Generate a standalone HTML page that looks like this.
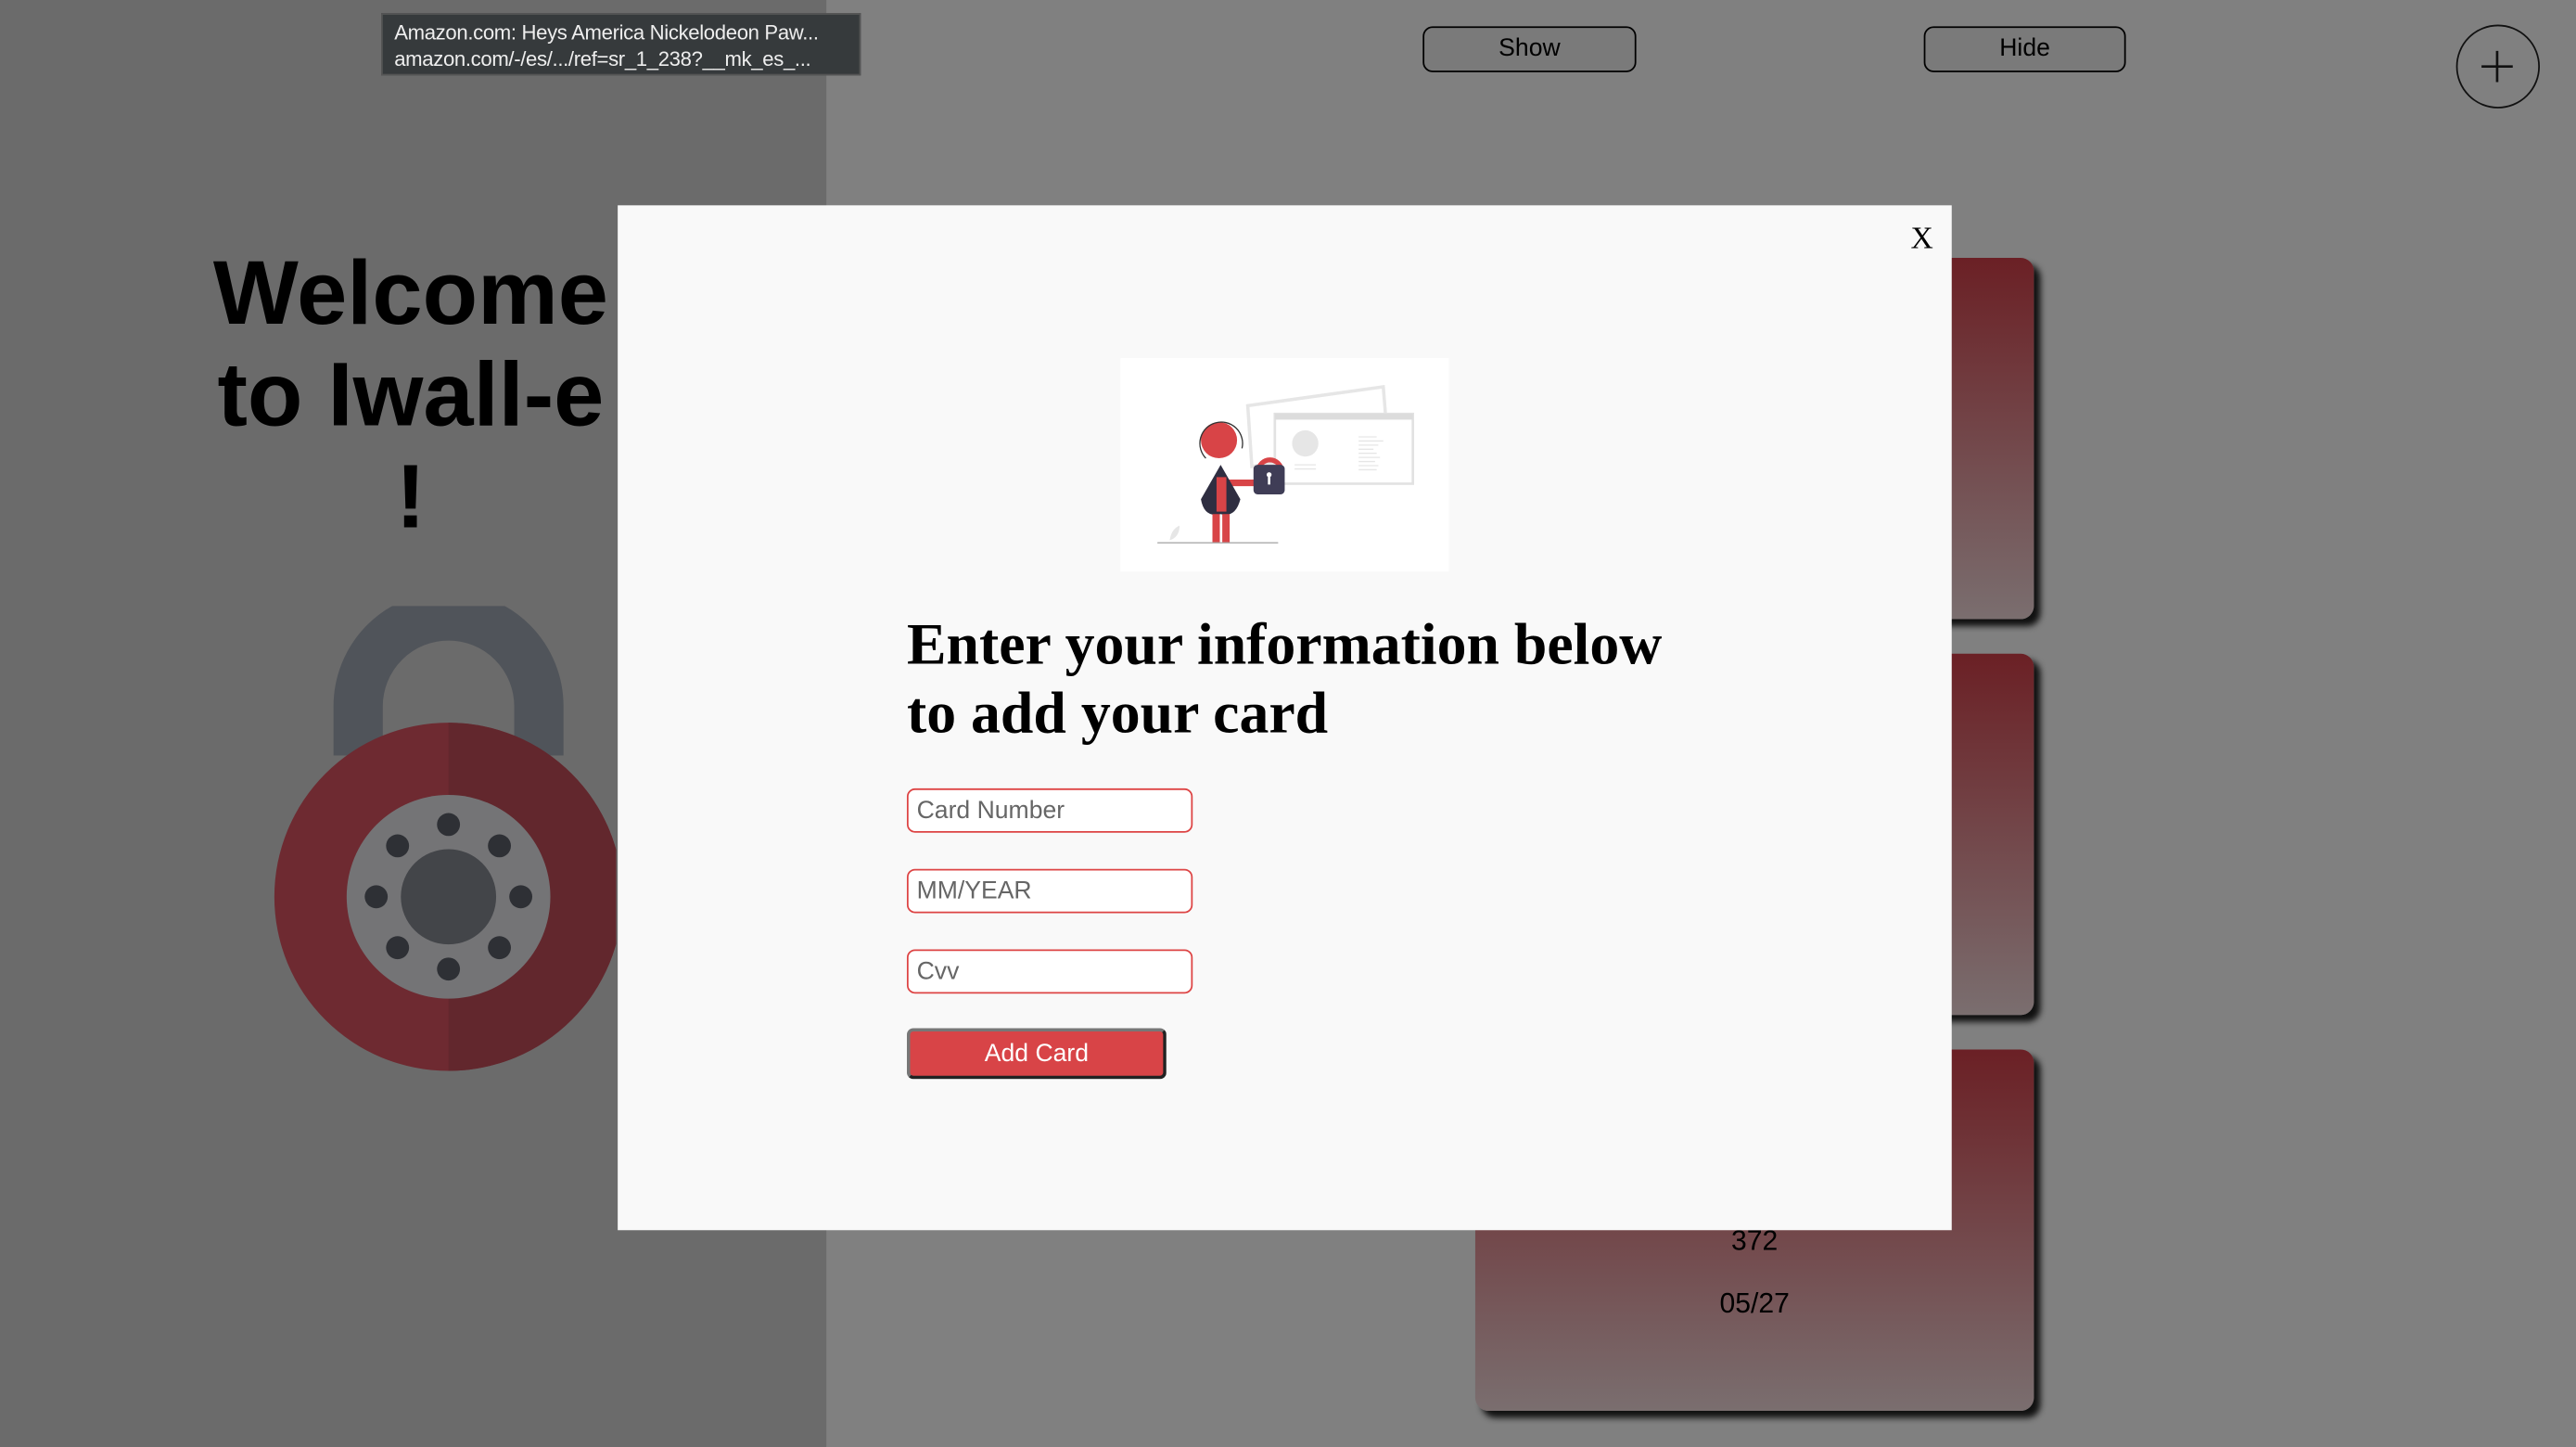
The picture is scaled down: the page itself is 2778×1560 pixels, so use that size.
<!DOCTYPE html>
<html><head><meta charset="utf-8"><style>
html,body{margin:0;padding:0;width:2778px;height:1560px;overflow:hidden;background:#808080}
#s{position:absolute;left:0;top:0;width:1568px;height:881px;transform:scale(1.77168,1.7707);transform-origin:0 0;font-family:"Liberation Sans",sans-serif}
.a{position:absolute}
.btn{position:absolute;border:1.5px solid #000;border-radius:6px;background:#7a7a7a;font-size:15px;text-align:center;box-sizing:border-box;line-height:25px}
.card{position:absolute;left:898px;width:340px;height:220px;border-radius:8px;background:linear-gradient(#6b2025,#7a6e6f);box-shadow:4px 4px 4px #111}
.inp{position:absolute;left:552px;width:174px;height:27px;border:1.5px solid #d44;border-radius:5px;background:#fff;box-sizing:border-box;font-size:15px;color:#666;padding-left:5px;line-height:25px}
</style></head><body><div id="s">
<div class="a" style="left:0;top:0;width:503px;height:881px;background:#6b6b6b"></div>
<div class="a" style="left:232px;top:8px;width:292px;height:38px;background:#363a3c;border:1px solid #555;color:#eee;font-size:12.5px;line-height:16px;padding:3px 0 0 7px;box-sizing:border-box;white-space:nowrap;letter-spacing:-0.2px">Amazon.com: Heys America Nickelodeon Paw...<br>amazon.com/-/es/.../ref=sr_1_238?__mk_es_...</div>
<div class="btn" style="left:866px;top:16px;width:130px;height:28px">Show</div>
<div class="btn" style="left:1171px;top:16px;width:123px;height:28px">Hide</div>
<div class="a" style="left:1495px;top:15px;width:51px;height:51px;border:1.5px solid #111;border-radius:50%;box-sizing:border-box"><svg width="48" height="48" viewBox="0 0 48 48" style="position:absolute;left:0;top:0"><path d="M24 15 V34 M14.5 24.5 H33.5" stroke="#111" stroke-width="1.5"/></svg></div>
<div class="a" style="left:127px;top:147px;width:246px;text-align:center;font-weight:bold;font-size:55px;line-height:62px">Welcome to Iwall-e !</div>
<svg class="a" style="left:135px;top:369px" width="240" height="284" viewBox="135 369 240 284">
<path d="M218 460 V430 a55 55 0 0 1 110 0 V460" fill="none" stroke="#50545a" stroke-width="30"/>
<circle cx="273" cy="546" r="106" fill="#6e2a31"/>
<path d="M273 440 a106 106 0 0 1 0 212z" fill="#62272d"/>
<circle cx="273" cy="546" r="62" fill="#747476"/>
<circle cx="273" cy="546" r="29" fill="#434549"/>
<g fill="#2e3035"><circle cx="273" cy="502" r="7"/><circle cx="273" cy="590" r="7"/><circle cx="229" cy="546" r="7"/><circle cx="317" cy="546" r="7"/><circle cx="242" cy="515" r="7"/><circle cx="304" cy="515" r="7"/><circle cx="242" cy="577" r="7"/><circle cx="304" cy="577" r="7"/></g>
</svg>
<div class="card" style="top:157px"></div>
<div class="card" style="top:398px"></div>
<div class="card" style="top:639px"><div class="a" style="left:0;width:340px;top:107px;text-align:center;font-size:17px">372</div><div class="a" style="left:0;width:340px;top:145px;text-align:center;font-size:17px">05/27</div></div>
<div class="a" style="left:376px;top:125px;width:812px;height:624px;background:#f9f9f9"></div>
<div class="a" style="left:1163px;top:135px;font-family:'Liberation Serif',serif;font-size:19px">X</div>
<svg class="a" style="left:681px;top:218px" width="202" height="130" viewBox="0 0 400 260">
<rect width="400" height="260" fill="#fff"/>
<path d="M155 58 L320 35 L326 110 L160 132z" fill="none" stroke="#e6e6e6" stroke-width="4"/>
<rect x="188" y="68" width="168" height="85" fill="#fff" stroke="#e2e2e2" stroke-width="3"/>
<rect x="188" y="68" width="168" height="7" fill="#dcdcdc"/>
<circle cx="225" cy="104" r="16" fill="#e6e6e6"/>
<path d="M212 130 h26 M212 135 h26" stroke="#e6e6e6" stroke-width="1.5"/>
<path d="M290 96 h22 M290 101 h30 M290 106 h24 M290 111 h18 M290 116 h22 M290 121 h26 M290 126 h20 M290 131 h24 M290 136 h22" stroke="#e6e6e6" stroke-width="1.5"/>
<circle cx="120" cy="100" r="22" fill="#d84447"/>
<path d="M104 122 a26 26 0 1 1 44 -12" fill="none" stroke="#333" stroke-width="1.5"/>
<path d="M130 152 h36" stroke="#d84447" stroke-width="8"/>
<path d="M168 138 a14 14 0 0 1 28 0" fill="none" stroke="#d84447" stroke-width="6"/>
<rect x="162" y="130" width="38" height="36" rx="5" fill="#3f3d56"/>
<path d="M181 142 v12" stroke="#fff" stroke-width="3"/><circle cx="181" cy="142" r="3" fill="#fff"/>
<path d="M122 130 L146 172 Q140 195 122 190 Q102 195 98 172z" fill="#2f2e41"/>
<rect x="117" y="145" width="12" height="42" fill="#d84447"/>
<rect x="112" y="190" width="9" height="35" fill="#d84447"/><rect x="124" y="190" width="9" height="35" fill="#d84447"/>
<path d="M45 225 h147" stroke="#aaa" stroke-width="1.5"/>
<path d="M60 222 q2 -14 12 -18 q0 14 -12 18" fill="#e6e6e6"/>
</svg>
<div class="a" style="left:552px;top:371px;font-family:'Liberation Serif',serif;font-weight:bold;font-size:36px;line-height:42px;white-space:nowrap">Enter your information below<br>to add your card</div>
<div class="inp" style="top:480px">Card Number</div>
<div class="inp" style="top:529px">MM/YEAR</div>
<div class="inp" style="top:578px">Cvv</div>
<div class="a" style="left:552px;top:626px;width:158px;height:31px;background:#d84447;border:2px solid;border-color:#777 #222 #222 #777;border-radius:4px;box-sizing:border-box;color:#fff;font-size:15px;text-align:center;line-height:27px">Add Card</div>
</div></body></html>
